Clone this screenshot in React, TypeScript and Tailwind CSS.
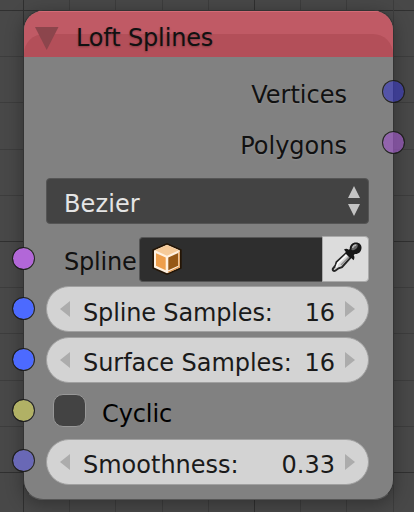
import React from "react";

const minor = [0, 1, 2, 3, 4, 5, 6, 7, 8, 9, 10];

function Grid() {
  return (
    <svg className="absolute inset-0 h-full w-full" viewBox="0 0 414 512" shapeRendering="crispEdges">
      {minor.map((i) => {
        const p = Math.round(i * 46.2);
        const color = i % 5 === 0 ? "#303030" : "#3d3d3d";
        return (
          <g key={i} fill={color}>
            <rect x={23 + p} y="0" width="1" height="512" />
            <rect x="0" y={10 + p} width="414" height="1" />
          </g>
        );
      })}
    </svg>
  );
}

function Socket({ side, place, color }: { side: "left" | "right"; place: string; color: string }) {
  return (
    <span
      className={`absolute size-[23px] rounded-full border border-[#191919]/90 bg-clip-padding ${
        side === "left" ? "-left-[11px]" : "-right-[11px]"
      } ${place} ${color}`}
    />
  );
}

function NumberField({ label, value, pad }: { label: string; value: string; pad: string }) {
  return (
    <div
      className={`relative ml-[23px] mr-[25px] flex h-[46px] items-start justify-between rounded-full border border-[#a0a0a0] bg-[#d3d3d3] pl-[36px] pr-[33px] text-[#1a1a1a] ${pad}`}
    >
      <svg className="absolute left-[13px] top-[14px] h-4 w-[10px]" viewBox="0 0 10 16">
        <path d="M10 0v16L0 8z" fill="#acacac" />
      </svg>
      <span>{label}</span>
      <span>{value}</span>
      <svg className="absolute right-[13px] top-[14px] h-4 w-[10px]" viewBox="0 0 10 16">
        <path d="M0 0v16l10-8z" fill="#acacac" />
      </svg>
    </div>
  );
}

function CubeIcon() {
  return (
    <svg className="ml-[12px] mt-[5px] h-8 w-[30px]" viewBox="0 0 30 32">
      <path d="M15 0 29.700 6.500v19L15 32 .3 25.500v-19z" fill="#241505" />
      <path d="m15 1.800 13 5.700v17L15 30.200 2 24.500v-17z" fill="#fff0df" />
      <path d="m15 2 12 5.200-12 5.500L3 7.200z" fill="#f6ca98" />
      <path d="m4 10.200 9.700 4.200v12.800L4 22.700z" fill="#ee9e4b" />
      <path d="m16.300 14.400 9.900-4.300v12.600l-9.900 4.600z" fill="#965816" />
      <path d="M27.300 8.500v15.600L16 29.200" fill="none" stroke="#e49b51" strokeWidth="1.200" />
    </svg>
  );
}

function EyedropperIcon() {
  return (
    <svg className="h-8 w-8" viewBox="0 0 32 32">
      <path
        d="M17.500 11 6.500 21 5.500 24.500 3 27.500c-.8 1.800.6 3 2.300 2.200l3.200-2.400 3.500-1.200L21.500 15.500z"
        fill="#d6d6d6"
        stroke="#252525"
        strokeWidth="2"
      />
      <path d="m16.800 13.500-9 8.700-1.500 4" fill="none" stroke="#fafafa" strokeWidth="1.800" />
      <path d="m20 15-9 9" stroke="#8f8f8f" strokeWidth="1.500" />
      <path
        d="M14 8.500c1.700-1 3.300-.8 4.800.3l1-.8C19.500 4.500 22 1.500 26 1.500c3.500 0 5.700 2.300 5.500 5.500-.2 4-3 6.300-6.700 6l-1.100 1.200c1 1.500 1 3.300-.2 5l-2.300-2.300-.9.300-4.800-4.700.4-1.500z"
        fill="#161616"
      />
      <path d="M21.500 9c-.4-3 1.800-5.600 5.200-6l1 .8c.5 2.500-1.700 5.200-4.700 5.400z" fill="#666" />
      <path d="M22.500 7c.7-2.200 2-3 3.700-3" fill="none" stroke="#b5b5b5" strokeWidth="1.400" />
    </svg>
  );
}

export default function App() {
  return (
    <div className="relative h-[512px] w-[414px] overflow-hidden bg-[#484848] pl-[23px] pt-[10px] font-['DejaVu_Sans',sans-serif] text-[24px] leading-[28px] text-[#111]">
      <Grid />
      <div className="relative h-[490px] w-[371px] rounded-[20px] shadow-[0_4px_18px_rgba(0,0,0,0.32)]">
        <div className="h-full w-full overflow-hidden rounded-[20px] border border-[#333] border-b-[#555] bg-[#838383]/98">
          <div className="relative h-[46px] bg-[#c05a65] shadow-[inset_0_1px_0_#d36b76]">
            <div className="absolute inset-x-0 bottom-0 h-[23px] rounded-t-[20px] bg-[#b34f59]" />
            <div className="relative flex items-start pl-[11px] pt-[13px]">
              <svg className="mt-[3px] h-6 w-6" viewBox="0 0 24 24">
                <path d="M0 0h23.500L11.700 23z" fill="#8c454c" />
              </svg>
              <span className="ml-[17px] tracking-[-0.15px] [text-shadow:0_1px_2px_rgba(0,0,0,0.25)]">Loft Splines</span>
            </div>
          </div>

          <div className="-mx-px flex flex-col pt-[10px]">
            <div className="flex h-[50px] justify-end pr-[47px] pt-[14px] [text-shadow:0_1px_2px_rgba(255,255,255,0.12)]">
              Vertices
            </div>
            <div className="flex h-[50px] justify-end pr-[47px] pt-[15px] [text-shadow:0_1px_2px_rgba(255,255,255,0.12)]">
              Polygons
            </div>

            <div className="ml-[23px] mr-[25px] mt-[11px] flex h-[46px] items-start justify-between rounded-[4px] border border-[#555] bg-[#434343] pl-[17px] pr-[8px] pt-[11px] text-[#e5e5e5]">
              <span className="tracking-[0.1px]">Bezier</span>
              <svg className="-mt-[4px] h-[30px] w-3" viewBox="0 0 12 30">
                <path d="M6 0l6 12H0zM0 18h12L6 30z" fill="#c3c3c3" />
              </svg>
            </div>

            <div className="ml-[41px] mr-[25px] mt-3 flex h-[46px] items-start">
              <span className="w-[75px] pt-[12px] tracking-[-0.2px]">Spline</span>
              <div className="mt-px flex h-[45px] w-[183px] rounded-l-[4px] border-y border-l border-[#555] bg-[#2e2e2e]">
                <CubeIcon />
              </div>
              <div className="flex h-[46px] w-[47px] items-start justify-center rounded-r-[4px] border border-[#aaa] bg-[#dcdcdc] pt-[4px]">
                <EyedropperIcon />
              </div>
            </div>

            <div className="mt-1">
              <NumberField label="Spline Samples:" value="16" pad="pt-[12px] tracking-[-0.15px]" />
            </div>
            <div className="mt-[5px]">
              <NumberField label="Surface Samples:" value="16" pad="pt-[11px] tracking-[-0.06px]" />
            </div>

            <div className="mt-[11px] flex h-[34px] items-start pl-[30px] text-black">
              <span className="size-[33px] rounded-[10px] border border-[#989898] bg-[#434343]" />
              <span className="ml-[16px] pt-[6px] tracking-[-0.1px]">Cyclic</span>
            </div>

            <div className="mt-[11px]">
              <NumberField label="Smoothness:" value="0.33" pad="pt-[11px]" />
            </div>
          </div>
        </div>

        <Socket side="right" place="top-[70px]" color="bg-[#3c3cbd]/65" />
        <Socket side="right" place="top-[121px]" color="bg-[#9a58c0]/70" />
        <Socket side="left" place="top-[237px]" color="bg-[#b267d8]" />
        <Socket side="left" place="top-[287px]" color="bg-[#4c6aff]" />
        <Socket side="left" place="top-[338px]" color="bg-[#4c6aff]" />
        <Socket side="left" place="top-[389px]" color="bg-[#b1b165]" />
        <Socket side="left" place="top-[439px]" color="bg-[#6968b6]" />
      </div>
    </div>
  );
}
